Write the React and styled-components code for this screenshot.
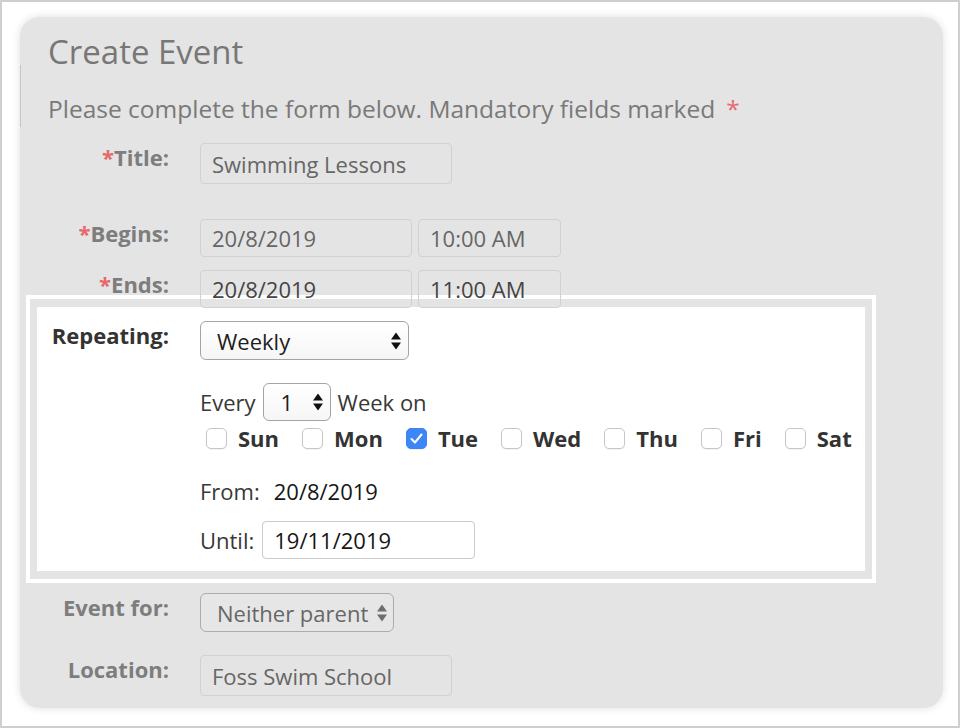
import React from 'react';
import styled, { createGlobalStyle } from 'styled-components';

const GlobalStyle = createGlobalStyle`
  html, body {
    margin: 0;
    padding: 0;
    background: #fff;
  }
  body {
    font-family: 'Open Sans', 'Noto Sans', sans-serif;
  }
  * {
    box-sizing: border-box;
  }
`;

const Page = styled.div`
  width: 960px;
  height: 728px;
  border: 2px solid #cfcfcf;
  background: #fff;
  padding: 15px 0 0 18px;
`;

const Card = styled.div`
  position: relative;
  width: 923px;
  height: 691px;
  background: #e4e4e4;
  border-radius: 20px;
  box-shadow: 0 0 8px rgba(0, 0, 0, 0.13);
  padding-top: 15px;
  display: flex;
  flex-direction: column;

  &::before {
    content: '';
    position: absolute;
    left: 0;
    top: 48px;
    width: 1px;
    height: 62px;
    background: #c6c6c6;
  }
`;

const Heading = styled.h1`
  margin: 0 0 0 28px;
  font-size: 33px;
  line-height: 40px;
  font-weight: 400;
  color: #777;
`;

const Intro = styled.p`
  margin: 21px 0 0 28px;
  font-size: 24.5px;
  line-height: 32px;
  color: #797979;
`;

const Req = styled.span`
  color: #e5686c;
  margin-left: ${p => (p.$spaced ? '11px' : 0)};
`;

const Row = styled.div`
  position: relative;
  z-index: 1;
  display: grid;
  grid-template-columns: ${p => p.$labelW || 149}px auto;
  column-gap: 31px;
  align-items: start;
  margin-top: ${p => p.$mt || 0}px;
`;

const Label = styled.label`
  text-align: right;
  font-size: 22px;
  line-height: 29px;
  font-weight: 700;
  white-space: nowrap;
  color: ${p => (p.$active ? '#333' : '#7d7d7d')};
`;

const Inline = styled.div`
  display: flex;
  align-items: center;
  gap: ${p => p.$gap || 6}px;
  margin-top: ${p => p.$mt || 0}px;
`;

const TextBox = styled.input`
  width: ${p => p.$w}px;
  height: ${p => p.$h || 38}px;
  margin: 0;
  padding: 0 0 0 11px;
  border: 1px solid ${p => (p.$light ? '#cbcbcb' : '#d1d1d1')};
  border-radius: 4px;
  background: ${p => (p.$light ? '#fff' : 'transparent')};
  color: ${p => p.$color || '#666'};
  font-family: inherit;
  font-size: 22px;
  outline: none;
`;

const SelectWrap = styled.div`
  position: relative;
  display: inline-flex;
  width: ${p => p.$w}px;
  height: ${p => p.$h}px;
`;

const NativeSelect = styled.select`
  appearance: none;
  -webkit-appearance: none;
  width: 100%;
  height: 100%;
  margin: 0;
  padding: 0 0 0 ${p => p.$pad || 16}px;
  border: 1px solid ${p => (p.$muted ? '#acacac' : '#a4a4a4')};
  border-radius: 6px;
  background: ${p => (p.$muted ? '#e6e6e6' : 'linear-gradient(#ffffff, #f6f6f6)')};
  color: ${p => (p.$muted ? '#676767' : '#1e1e1e')};
  font-family: inherit;
  font-size: 22px;
  outline: none;
`;

const Arrows = styled.svg`
  position: absolute;
  right: ${p => p.$right || 8}px;
  top: 50%;
  transform: translateY(-50%);
  pointer-events: none;
`;

const Highlight = styled.section`
  margin: -13px 0 0 6px;
  width: 850px;
  border: 4px solid #fff;
  padding: 8px 7px 8px 7px;
`;

const HighlightInner = styled.div`
  background: #fff;
  padding: 14px 0 12px;
`;

const Stack = styled.div`
  display: flex;
  flex-direction: column;
`;

const Text = styled.span`
  font-size: 22px;
  line-height: 32px;
  color: ${p => p.$color || '#383838'};
  white-space: nowrap;
`;

const Days = styled.div`
  display: flex;
  align-items: center;
  height: 24px;
  margin-top: 5px;
  padding-left: 6px;
  gap: 23px;
`;

const Day = styled.label`
  display: flex;
  align-items: center;
  gap: 11px;
  font-size: 22px;
  line-height: 24px;
  font-weight: 700;
  color: #333;
`;

const Box = styled.span`
  width: 21px;
  height: 21px;
  border-radius: 5px;
  border: 1px solid ${p => (p.$checked ? '#3a84f4' : '#c6c6c6')};
  background: ${p => (p.$checked ? '#3d86f6' : '#fff')};
  display: inline-flex;
  align-items: center;
  justify-content: center;
  box-shadow: 0 1px 1px rgba(0, 0, 0, 0.05);
`;

const Select = ({ w, h, value, muted, pad, right }) => (
  <SelectWrap $w={w} $h={h}>
    <NativeSelect $muted={muted} $pad={pad} defaultValue={value}>
      <option>{value}</option>
    </NativeSelect>
    <Arrows $right={right} width="10" height="17" viewBox="0 0 10 17">
      <g fill={muted ? '#6e6e6e' : '#111'}>
        <polygon points="0,7 5,0 10,7" />
        <polygon points="0,10 10,10 5,17" />
      </g>
    </Arrows>
  </SelectWrap>
);

const Checkbox = ({ label, checked }) => (
  <Day>
    <Box $checked={checked}>
      {checked && (
        <svg width="13" height="11" viewBox="0 0 13 11">
          <polyline points="1.5,6 5,9.5 11.5,1.5" fill="none" stroke="#fff" strokeWidth="2" strokeLinecap="round" strokeLinejoin="round" />
        </svg>
      )}
    </Box>
    {label}
  </Day>
);

const days = [
  { label: 'Sun' },
  { label: 'Mon' },
  { label: 'Tue', checked: true },
  { label: 'Wed' },
  { label: 'Thu' },
  { label: 'Fri' },
  { label: 'Sat' }
];

export default function App() {
  return (
    <>
      <GlobalStyle />
      <Page>
        <Card>
          <Heading>Create Event</Heading>
          <Intro>
            Please complete the form below. Mandatory fields marked<Req $spaced>*</Req>
          </Intro>

          <Row $mt={18}>
            <Label><Req>*</Req>Title:</Label>
            <TextBox $w={252} $h={41} defaultValue="Swimming Lessons" />
          </Row>

          <Row $mt={35}>
            <Label><Req>*</Req>Begins:</Label>
            <Inline>
              <TextBox $w={212} defaultValue="20/8/2019" />
              <TextBox $w={143} defaultValue="10:00 AM" />
            </Inline>
          </Row>

          <Row $mt={13}>
            <Label><Req>*</Req>Ends:</Label>
            <Inline>
              <TextBox $w={212} $color="#444" defaultValue="20/8/2019" />
              <TextBox $w={143} $color="#444" defaultValue="11:00 AM" />
            </Inline>
          </Row>

          <Highlight>
            <HighlightInner>
              <Row $labelW={132}>
                <Label $active>Repeating:</Label>
                <Stack>
                  <Select w={209} h={39} value="Weekly" />
                  <Inline $mt={23} $gap={7}>
                    <Text>Every</Text>
                    <Select w={68} h={38} value="1" pad={17} />
                    <Text>Week on</Text>
                  </Inline>
                  <Days>
                    {days.map(d => (
                      <Checkbox key={d.label} label={d.label} checked={d.checked} />
                    ))}
                  </Days>
                  <Inline $mt={25} $gap={14}>
                    <Text>From:</Text>
                    <Text $color="#161616">20/8/2019</Text>
                  </Inline>
                  <Inline $mt={14} $gap={8}>
                    <Text>Until:</Text>
                    <TextBox $w={213} $light $color="#161616" defaultValue="19/11/2019" />
                  </Inline>
                </Stack>
              </Row>
            </HighlightInner>
          </Highlight>

          <Row $mt={10}>
            <Label>Event for:</Label>
            <Select w={194} h={39} value="Neither parent" muted right={7} />
          </Row>

          <Row $mt={23}>
            <Label>Location:</Label>
            <TextBox $w={252} $h={41} defaultValue="Foss Swim School" />
          </Row>
        </Card>
      </Page>
    </>
  );
}
